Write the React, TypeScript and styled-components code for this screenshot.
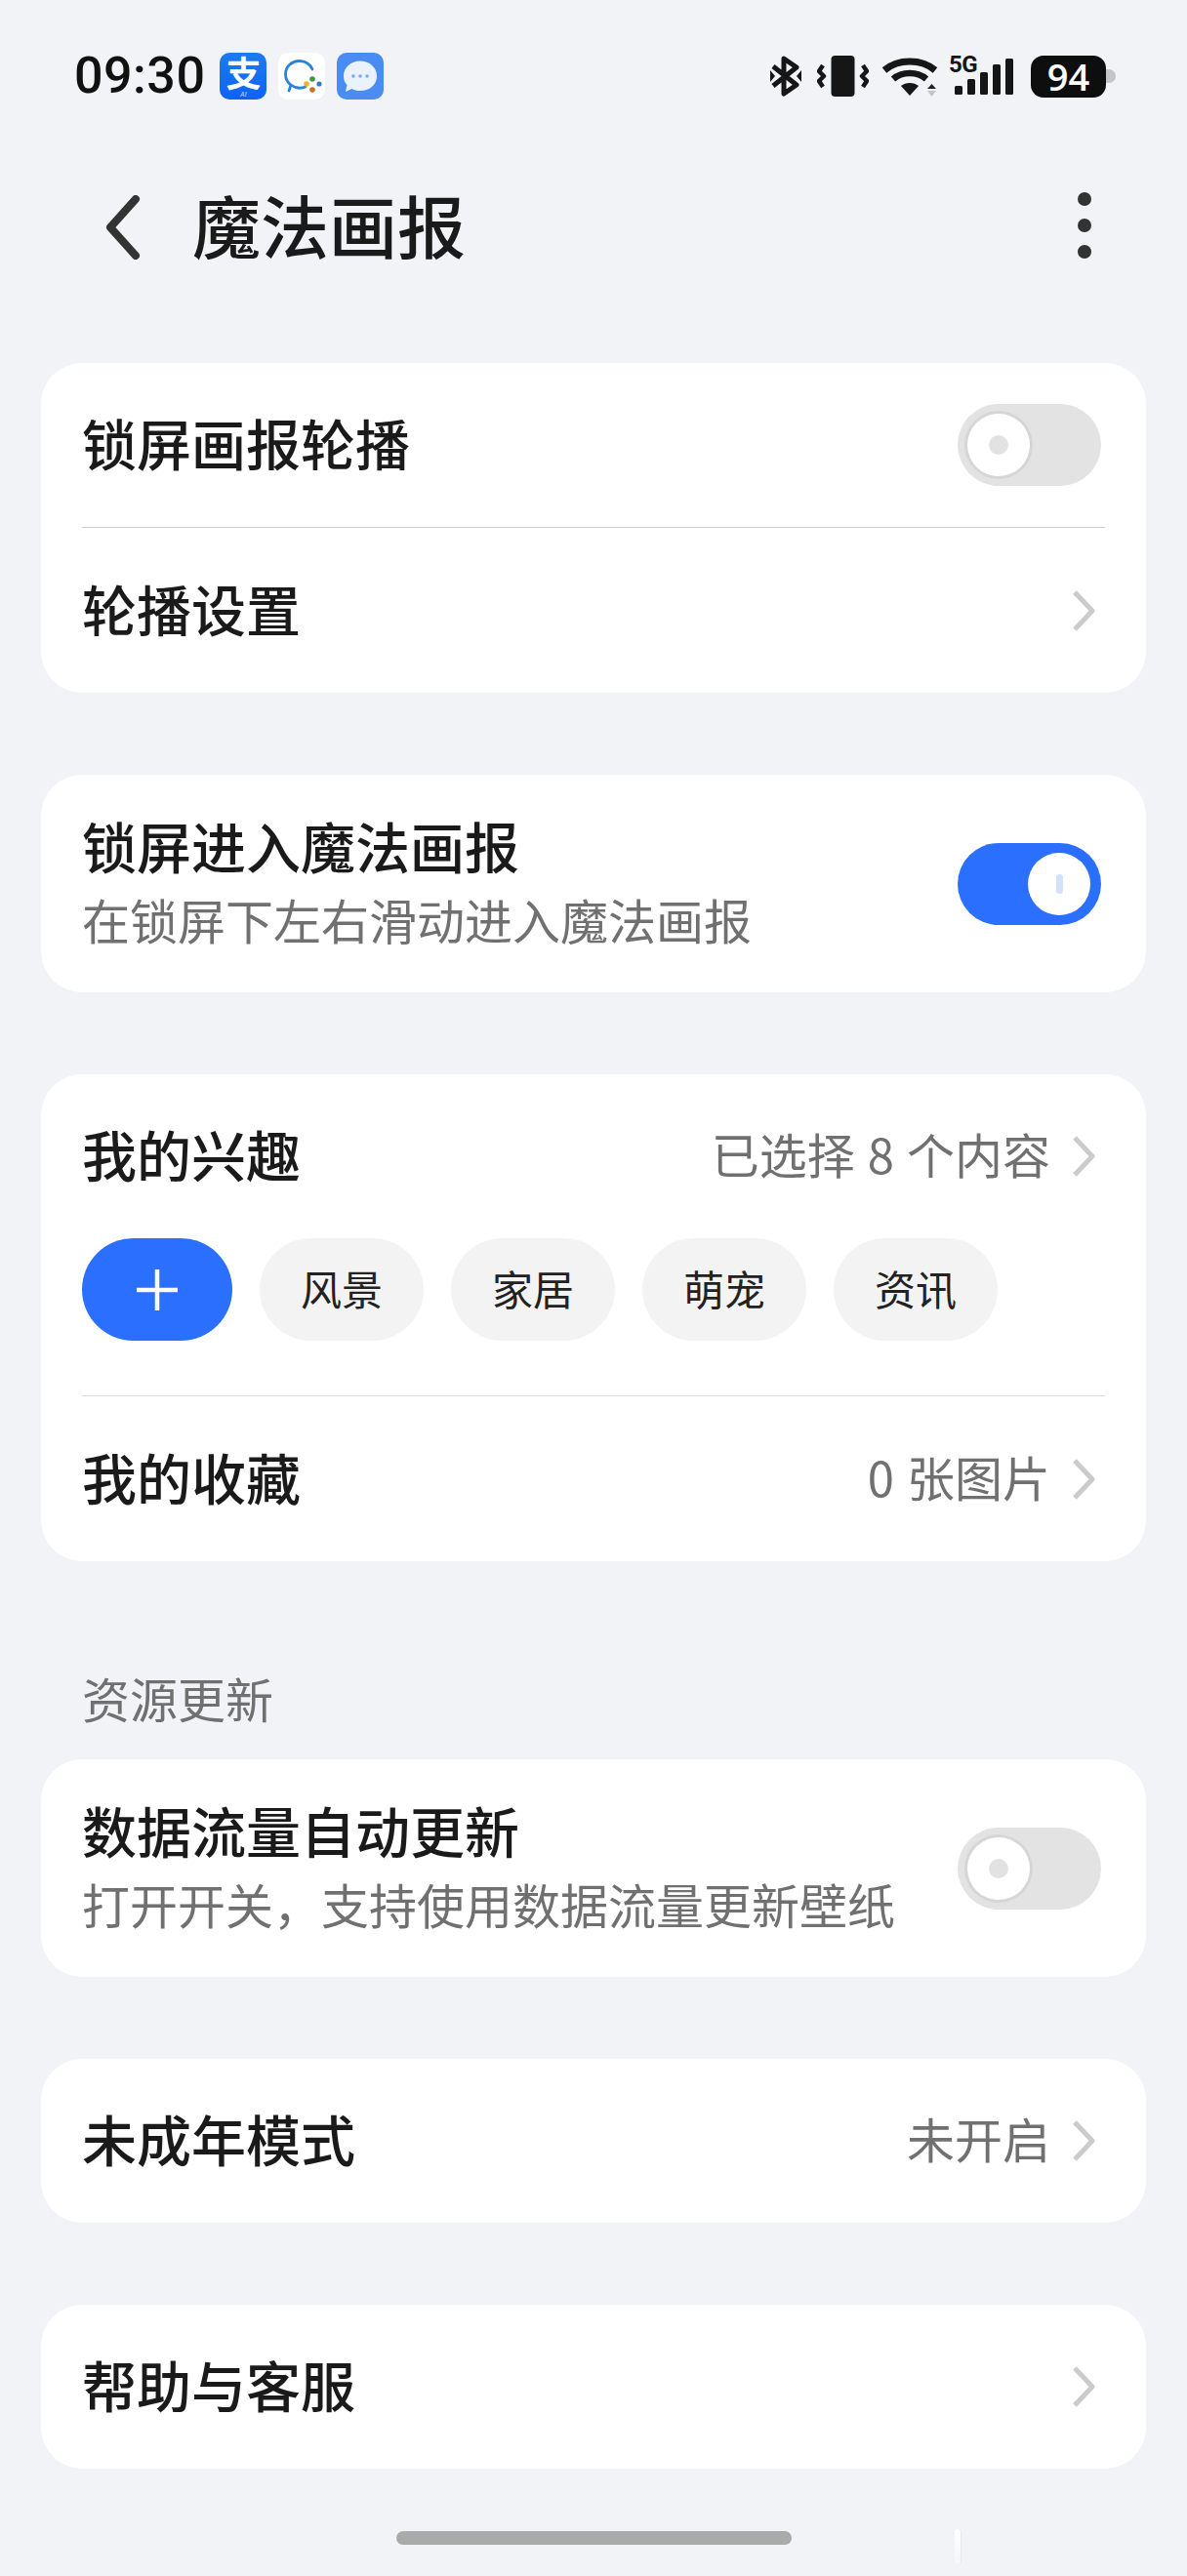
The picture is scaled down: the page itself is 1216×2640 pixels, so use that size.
import React from "react";
import styled, { createGlobalStyle } from "styled-components";

const Global = createGlobalStyle`
  html, body { margin: 0; padding: 0; background: #f1f3f7; }
  * { box-sizing: border-box; }
`;

const CJK = `"Noto Sans CJK SC", "Noto Sans", sans-serif`;

const Page = styled.div`
  position: relative;
  width: 1216px;
  height: 2640px;
  overflow: hidden;
  background: #f1f3f7;
  padding-top: 54px;
  font-family: ${CJK};
  color: #1a1a1a;
`;

const StatusBar = styled.div`
  display: flex;
  justify-content: space-between;
  align-items: center;
  height: 48px;
  padding: 0 73px 0 76px;
`;
const StatusGroup = styled.div`
  display: flex;
  align-items: center;
`;
const Time = styled.span`
  font-family: Roboto, sans-serif;
  font-size: 52px;
  font-weight: 500;
  line-height: 48px;
  letter-spacing: 0.5px;
  color: #111;
  margin-right: 15px;
`;
const AliTile = styled.div`
  position: relative;
  display: flex;
  justify-content: center;
  width: 48px;
  height: 48px;
  margin-right: 12px;
  border-radius: 10px;
  background: linear-gradient(#1d7bf0, #0f62f5);
`;
const AliGlyph = styled.span`
  height: 38px;
  font-size: 36px;
  font-weight: 700;
  line-height: 38px;
  color: #fff;
`;
const AliBadge = styled.span`
  position: absolute;
  left: 0;
  right: 0;
  bottom: 1px;
  font-family: Roboto, sans-serif;
  font-size: 7px;
  font-style: italic;
  line-height: 8px;
  text-align: center;
  color: #cfe0ff;
`;
const AppIcon = styled.svg<{ $gap?: number }>`
  display: block;
  width: 48px;
  height: 48px;
  margin-right: ${(p) => p.$gap ?? 0}px;
`;
const StatusIcon = styled.svg<{ $gap?: number }>`
  display: block;
  flex: none;
  margin-right: ${(p) => p.$gap ?? 0}px;
`;
const Signal = styled.div`
  position: relative;
  width: 66px;
  height: 42px;
  margin-right: 18px;
`;
const FiveG = styled.span`
  position: absolute;
  left: 0;
  top: -2px;
  font-family: Roboto, sans-serif;
  font-size: 24px;
  font-weight: 700;
  line-height: 22px;
  letter-spacing: -0.5px;
  color: #161616;
`;
const Battery = styled.div`
  display: flex;
  align-items: center;
`;
const BatteryBody = styled.div`
  width: 77px;
  height: 43px;
  border-radius: 13px;
  background: #0e0e0e;
  color: #fff;
  font-family: "Open Sans", sans-serif;
  font-size: 38px;
  font-weight: 600;
  line-height: 43px;
  text-align: center;
`;
const BatteryTip = styled.div`
  width: 10px;
  height: 14px;
  border-radius: 0 7px 7px 0;
  background: #c4c5c7;
`;

const Header = styled.header`
  display: flex;
  align-items: center;
  height: 110px;
  margin-top: 76px;
  padding: 0 98px 0 108px;
`;
const BackIcon = styled.svg`
  display: block;
  width: 36px;
  height: 66px;
  margin-right: 53px;
`;
const Title = styled.h1`
  flex: 1;
  margin: 0;
  padding-bottom: 6px;
  font-size: 70px;
  font-weight: 500;
  line-height: 104px;
  color: #1a1a1a;
`;
const Dots = styled.div`
  display: flex;
  flex-direction: column;
  gap: 13px;
  padding-bottom: 4px;
`;
const Dot = styled.span`
  display: block;
  width: 14px;
  height: 14px;
  border-radius: 50%;
  background: #333;
`;

const Main = styled.main`
  display: flex;
  flex-direction: column;
  padding: 0 42px;
  margin-top: 84px;
`;
const Card = styled.section<{ $top?: number }>`
  background: #fff;
  border-radius: 42px;
  margin-top: ${(p) => p.$top ?? 84}px;
`;
const Row = styled.div`
  display: flex;
  align-items: center;
  height: 168px;
  padding: 0 46px 0 42px;
`;
const TallRow = styled(Row)`
  height: 223px;
`;
const Label = styled.div`
  font-size: 56px;
  font-weight: 500;
  line-height: 76px;
  color: #1a1a1a;
`;
const RowLabel = styled(Label)`
  flex: 1;
  padding-bottom: 6px;
`;
const Texts = styled.div`
  flex: 1;
  padding-bottom: 4px;
`;
const Sub = styled.div`
  font-size: 49px;
  font-weight: 400;
  line-height: 76px;
  color: #707070;
`;
const Value = styled.span`
  padding-bottom: 6px;
  font-size: 49px;
  font-weight: 400;
  line-height: 76px;
  word-spacing: 2px;
  color: #707070;
  margin-right: 22px;
`;
const Chevron = styled.svg`
  display: block;
  flex: none;
  width: 24px;
  height: 44px;
  margin-right: 6px;
`;
const Divider = styled.div<{ $color: string }>`
  height: 1px;
  margin: 0 42px 1px;
  background: ${(p) => p.$color};
`;

const Toggle = styled.div<{ $on?: boolean }>`
  flex: none;
  display: flex;
  align-items: center;
  justify-content: ${(p) => (p.$on ? "flex-end" : "flex-start")};
  width: 147px;
  height: 84px;
  padding: 0 ${(p) => (p.$on ? 11 : 0)}px 0 ${(p) => (p.$on ? 0 : 10)}px;
  border-radius: 42px;
  background: ${(p) => (p.$on ? "#2b6fff" : "#e3e3e3")};
`;
const Knob = styled.div<{ $on?: boolean }>`
  display: flex;
  align-items: center;
  justify-content: center;
  width: 64px;
  height: 64px;
  border-radius: 50%;
  background: #fff;
  box-shadow: ${(p) => (p.$on ? "none" : "0 0 0 3px #d6d6d6")};
`;
const KnobDot = styled.span`
  width: 20px;
  height: 20px;
  border-radius: 50%;
  background: #e2e2e2;
`;
const KnobBar = styled.span`
  width: 7px;
  height: 20px;
  border-radius: 3px;
  background: #d3e1fb;
`;

const Chips = styled.div`
  display: flex;
  gap: 28px;
  padding: 0 42px;
  margin-bottom: 56px;
`;
const AddChip = styled.div`
  display: flex;
  align-items: center;
  justify-content: center;
  width: 154px;
  height: 105px;
  border-radius: 53px;
  background: #2b6fff;
`;
const Chip = styled.div`
  display: flex;
  align-items: center;
  justify-content: center;
  width: 168px;
  height: 105px;
  padding-bottom: 4px;
  border-radius: 53px;
  background: #f3f3f3;
  font-size: 42px;
  color: #222;
`;
const SectionLabel = styled.div`
  margin-top: 104px;
  padding-left: 42px;
  font-size: 49px;
  line-height: 72px;
  color: #707070;
`;
const SectionCard = styled(Card)`
  margin-top: 27px;
`;
const HomeBar = styled.div`
  width: 405px;
  height: 14px;
  margin: 64px auto 0;
  border-radius: 7px;
  background: #a9aaaa;
`;
const Smudge = styled.div`
  position: absolute;
  left: 978px;
  top: 2592px;
  width: 6px;
  height: 36px;
  border-radius: 3px;
  background: linear-gradient(#fff, #f5f6f9);
  box-shadow: 1px 0 1px rgba(0, 0, 0, 0.05);
`;

const Chev = () => (
  <Chevron viewBox="0 0 24 44">
    <path d="M3 3 L21 22 L3 41" fill="none" stroke="#cbcbcb" strokeWidth="5" strokeLinejoin="round" />
  </Chevron>
);

const Switch = ({ on }: { on?: boolean }) => (
  <Toggle $on={on}>
    <Knob $on={on}>{on ? <KnobBar /> : <KnobDot />}</Knob>
  </Toggle>
);

const WeCom = () => (
  <AppIcon $gap={12} viewBox="0 0 48 48">
    <rect width="48" height="48" rx="10" fill="#fff" />
    <path d="M11 39 L13 33 C9 30 7.500 26 7.500 22 C7.500 14 14 8.500 22 8.500 C28 8.500 33 12 35 17 M13 33 C17 36 23 37 28 35" fill="none" stroke="#2a83d8" strokeWidth="2.800" strokeLinecap="round" strokeLinejoin="round" />
    <circle cx="35" cy="27" r="2.800" fill="#3f9a3f" />
    <circle cx="42" cy="32" r="2.600" fill="#3478c6" />
    <circle cx="29" cy="32" r="2.800" fill="#eeb32e" />
    <circle cx="35" cy="38" r="2.800" fill="#c8702a" />
  </AppIcon>
);

const Message = () => (
  <AppIcon viewBox="0 0 48 48">
    <rect width="48" height="48" rx="10" fill="#4a8cf2" />
    <path d="M24 8.500 C33.500 8.500 41 15 41 24 C41 33 33.500 39 24 39 C20.500 39 18 38.500 15.500 37 L9 40 L10.500 33 C8 30.500 7 27.500 7 24 C7 15 14.500 8.500 24 8.500 Z" fill="#eaf3fd" />
    <circle cx="17" cy="24" r="1.800" fill="#7ea9ea" />
    <circle cx="24" cy="24" r="1.800" fill="#7ea9ea" />
    <circle cx="31" cy="24" r="1.800" fill="#7ea9ea" />
  </AppIcon>
);

export default function App() {
  return (
    <Page>
      <Global />
      <StatusBar>
        <StatusGroup>
          <Time>09:30</Time>
          <AliTile>
            <AliGlyph>支</AliGlyph>
            <AliBadge>AI</AliBadge>
          </AliTile>
          <WeCom />
          <Message />
        </StatusGroup>
        <StatusGroup>
          <StatusIcon $gap={16} width="32" height="42" viewBox="0 0 32 42">
            <path d="M3 11 L27 30 L14 39 V3 L27 12 L3 31" fill="none" stroke="#161616" strokeWidth="5" strokeLinejoin="round" />
            <path d="M0 15 L5 21 L0 27 Z M32 15 L27 21 L32 27 Z" fill="#161616" />
          </StatusIcon>
          <StatusIcon $gap={13} width="53" height="42" viewBox="0 0 53 42">
            <rect x="14.500" y="0" width="24" height="42" rx="4" fill="#161616" />
            <path d="M6 10 L2 16 L7 21 L2 26 L6 32 M47 10 L51 16 L46 21 L51 26 L47 32" fill="none" stroke="#161616" strokeWidth="4.500" strokeLinejoin="round" />
          </StatusIcon>
          <StatusIcon $gap={10} width="59" height="42" viewBox="0 0 59 42">
            <path d="M3 15 C17 3 41 3 55 15" fill="none" stroke="#161616" strokeWidth="7" />
            <path d="M12 24 C21 16 37 16 46 24" fill="none" stroke="#161616" strokeWidth="6.500" />
            <path d="M20 31 C25 27 33 27 38 31 L29 41 Z" fill="#161616" />
            <path d="M47 34 L51.500 29 L56 34 Z" fill="#222" />
            <path d="M47 36 H56 L51.500 42 Z" fill="#c4c5c7" />
          </StatusIcon>
          <Signal>
            <FiveG>5G</FiveG>
            <svg width="66" height="42" viewBox="0 0 66 42" style={{ display: "block" }}>
              <rect x="6" y="31" width="8" height="9" rx="1.500" fill="#161616" />
              <rect x="19" y="24" width="8" height="16" rx="1.500" fill="#161616" />
              <rect x="32" y="17" width="8" height="23" rx="1.500" fill="#161616" />
              <rect x="45" y="9" width="8" height="31" rx="1.500" fill="#161616" />
              <rect x="58" y="3" width="8" height="37" rx="1.500" fill="#161616" />
            </svg>
          </Signal>
          <Battery>
            <BatteryBody>94</BatteryBody>
            <BatteryTip />
          </Battery>
        </StatusGroup>
      </StatusBar>

      <Header>
        <BackIcon viewBox="0 0 36 66">
          <path d="M31 4 L5 33 L31 62" fill="none" stroke="#333" strokeWidth="8" strokeLinejoin="round" strokeLinecap="round" />
        </BackIcon>
        <Title>魔法画报</Title>
        <Dots>
          <Dot />
          <Dot />
          <Dot />
        </Dots>
      </Header>

      <Main>
        <Card $top={0}>
          <Row>
            <RowLabel>锁屏画报轮播</RowLabel>
            <Switch />
          </Row>
          <Divider $color="#cfcfcf" />
          <Row>
            <RowLabel>轮播设置</RowLabel>
            <Chev />
          </Row>
        </Card>

        <Card>
          <TallRow>
            <Texts>
              <Label>锁屏进入魔法画报</Label>
              <Sub>在锁屏下左右滑动进入魔法画报</Sub>
            </Texts>
            <Switch on />
          </TallRow>
        </Card>

        <Card>
          <Row>
            <RowLabel>我的兴趣</RowLabel>
            <Value>已选择 8 个内容</Value>
            <Chev />
          </Row>
          <Chips>
            <AddChip>
              <svg width="42" height="42" viewBox="0 0 42 42">
                <path d="M21 0 V42 M0 21 H42" stroke="#fff" strokeWidth="4.500" fill="none" />
              </svg>
            </AddChip>
            <Chip>风景</Chip>
            <Chip>家居</Chip>
            <Chip>萌宠</Chip>
            <Chip>资讯</Chip>
          </Chips>
          <Divider $color="#dcdcdc" />
          <Row>
            <RowLabel>我的收藏</RowLabel>
            <Value>0 张图片</Value>
            <Chev />
          </Row>
        </Card>

        <SectionLabel>资源更新</SectionLabel>
        <SectionCard>
          <TallRow>
            <Texts>
              <Label>数据流量自动更新</Label>
              <Sub>打开开关，支持使用数据流量更新壁纸</Sub>
            </Texts>
            <Switch />
          </TallRow>
        </SectionCard>

        <Card>
          <Row>
            <RowLabel>未成年模式</RowLabel>
            <Value>未开启</Value>
            <Chev />
          </Row>
        </Card>

        <Card>
          <Row>
            <RowLabel>帮助与客服</RowLabel>
            <Chev />
          </Row>
        </Card>
      </Main>

      <HomeBar />
      <Smudge />
    </Page>
  );
}
